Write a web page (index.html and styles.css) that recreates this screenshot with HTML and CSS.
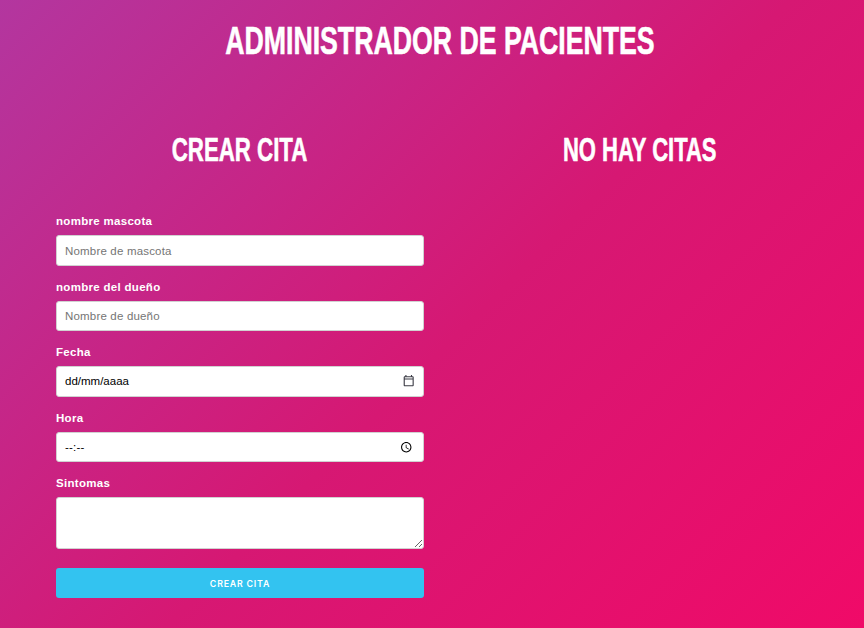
FILE: index.html
```html
<!DOCTYPE html>
<html lang="es">
<head>
<meta charset="utf-8">
<title>Administrador de pacientes</title>
<link rel="stylesheet" href="styles.css">
</head>
<body>
<div class="app">
  <h1 class="title"><span class="squeeze squeeze-title">Administrador de pacientes</span></h1>
  <div class="columns">
    <section class="column">
      <h2 class="subtitle"><span class="squeeze squeeze-sub">Crear cita</span></h2>
      <form class="form">
        <label class="label">nombre mascota</label>
        <input class="field" type="text" placeholder="Nombre de mascota">
        <label class="label">nombre del dueño</label>
        <input class="field" type="text" placeholder="Nombre de dueño">
        <label class="label">Fecha</label>
        <div class="picker">
          <input class="field date" type="text" value="dd/mm/aaaa">
          <svg class="picker-icon cal" viewBox="0 0 20 20" aria-hidden="true"><path d="M15.8333 3.33334H15V1.66667H13.3333V3.33334H6.66667V1.66667H5V3.33334H4.16667C3.24167 3.33334 2.50833 4.08334 2.50833 5.00001L2.5 16.6667C2.5 17.5833 3.24167 18.3333 4.16667 18.3333H15.8333C16.75 18.3333 17.5 17.5833 17.5 16.6667V5.00001C17.5 4.08334 16.75 3.33334 15.8333 3.33334ZM15.8333 16.6667H4.16667V8.33334H15.8333V16.6667ZM15.8333 6.66667H4.16667V5.00001H15.8333V6.66667Z"/></svg>
        </div>
        <label class="label">Hora</label>
        <div class="picker">
          <input class="field" type="text" value="--:--">
          <svg class="picker-icon clock" viewBox="0 0 24 24" aria-hidden="true"><path d="M11.99 2C6.47 2 2 6.48 2 12s4.47 10 9.99 10C17.52 22 22 17.52 22 12S17.52 2 11.99 2zM12 20c-4.42 0-8-3.58-8-8s3.58-8 8-8 8 3.58 8 8-3.58 8-8 8zm.5-13H11v6l5.25 3.15.75-1.23-4.5-2.67z"/></svg>
        </div>
        <label class="label">Sintomas</label>
        <textarea class="field area"></textarea>
        <button class="submit" type="button">Crear cita</button>
      </form>
    </section>
    <section class="column">
      <h2 class="subtitle"><span class="squeeze squeeze-sub2">No hay citas</span></h2>
    </section>
  </div>
</div>
</body>
</html>
```

FILE: styles.css
```css
* { box-sizing: border-box; }
html, body { margin: 0; height: 100%; }
body {
  background: linear-gradient(135deg, #b3369f 0%, #d61873 53%, #f00a68 100%);
  background-repeat: no-repeat;
  font-family: "Liberation Sans", Arial, sans-serif;
  color: #fff;
  overflow: hidden;
}
.app { width: 800px; margin-left: 40px; padding-top: 20px; }
.title, .subtitle {
  font-family: "Liberation Sans", sans-serif;
  font-weight: 700;
  text-transform: uppercase;
  text-align: center;
  margin: 0;
  color: #fff;
  white-space: nowrap;
}
.title { font-size: 38.4px; line-height: 42px; }
.subtitle { font-size: 34px; line-height: 36px; }
.squeeze { display: inline-block; -webkit-text-stroke: 0.6px #fff; }
.squeeze-title { transform: scaleX(0.695); }
.squeeze-sub { transform: scaleX(0.655); }
.squeeze-sub2 { transform: scaleX(0.647); }
.columns { display: flex; margin-top: 69px; }
.column { width: 400px; }
.form { display: flex; flex-direction: column; padding: 47.4px 16px 0; }
.label { font-size: 11.5px; letter-spacing: 0.3px; font-weight: 700; line-height: 14px; margin-bottom: 7px; }
.field {
  display: block;
  width: 100%;
  height: 30.4px;
  margin: 0 0 14.05px;
  padding: 0 8px;
  border: 1px solid #d1d1d1;
  border-radius: 3px;
  background: #fff;
  font-family: "Liberation Sans", Arial, sans-serif;
  font-size: 11.5px;
  letter-spacing: 0.18px;
  color: #000;
}
.date { letter-spacing: 0; }
.picker { position: relative; }
.picker-icon { position: absolute; fill: #3c3c46; }
.cal { width: 13.4px; height: 13.4px; right: 9px; top: 8px; }
.clock { width: 12.5px; height: 12.5px; right: 12px; top: 9px; fill: #000; }
.area { height: 52px; margin-bottom: 19px; }
.submit {
  height: 30px;
  border: 0;
  border-radius: 3px;
  background: #33c3f0;
  color: #fff;
  font-family: Inter, "Liberation Sans", sans-serif;
  font-size: 8.8px;
  font-weight: 600;
  letter-spacing: 0.8px;
  text-transform: uppercase;
}
```
